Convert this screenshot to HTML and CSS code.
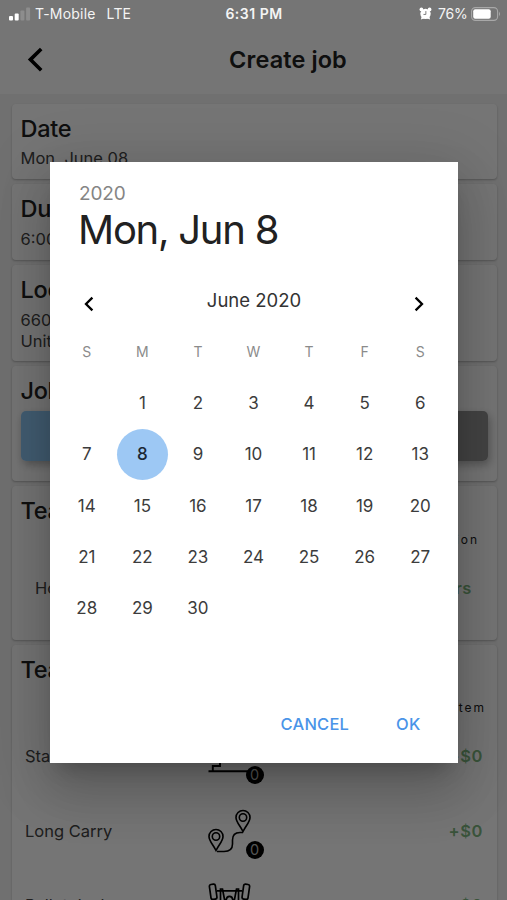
FILE: index.html
```html
<!DOCTYPE html>
<html lang="en">
<head>
	<meta charset="utf-8">
	<meta name="viewport" content="width=device-width, initial-scale=1">
	<title>Create job</title>
	<link rel="stylesheet" href="styles.css">
</head>
<body>
<div class="app">
	<header class="header">
		<svg class="back" viewBox="0 0 18 26" width="18" height="26">
			<path d="M 15.2 2 L 4.4 12.6 L 15.2 23.2" fill="none" stroke="#000" stroke-width="3.6"></path>
		</svg>
		<h1>Create job</h1>
	</header>

	<main class="cards">
		<section class="card card-date">
			<h2>Date</h2>
			<p>Mon, June 08</p>
		</section>
		<section class="card card-duration">
			<h2>Duration</h2>
			<p>6:00 PM</p>
		</section>
		<section class="card card-location">
			<h2>Location</h2>
			<p>660 Main St<br>United States</p>
		</section>
		<section class="card card-job">
			<h2>Job</h2>
			<div class="choices">
				<span class="choice choice-on"></span>
				<span class="choice"></span>
			</div>
		</section>
		<section class="card card-team">
			<h2>Team</h2>
			<div class="caption caption-team">Duration</div>
			<div class="row row-team"><span>Hours</span><b>hrs</b></div>
		</section>
		<section class="card card-items">
			<h2>Team</h2>
			<div class="caption">Item</div>
			<div class="row">
				<span>Stairs</span>
				<div class="icon">
					<!-- stairs -->
					<svg viewBox="0 0 46 46" width="46" height="46">
						<path d="M 0.5 38.2 H 40 M 4.8 38.2 V 33 H 12 V 26 H 19 V 20 H 26" fill="none" stroke="#000" stroke-width="1.9"></path>
					</svg>
					<i class="badge">0</i>
				</div>
				<b>+$0</b>
			</div>
			<div class="row">
				<span>Long Carry</span>
				<div class="icon">
					<!-- two pins joined by a route -->
					<svg viewBox="0 0 46 46" width="46" height="46">
						<g fill="none" stroke="#000" stroke-width="1.6">
							<path d="M 8 42.5 C 5 36.5 1 33 1 28.5 A 7 7 0 0 1 15 28.5 C 15 33 11 36.5 8 42.5 Z"></path>
							<circle cx="8" cy="28.5" r="3.7"></circle>
							<path d="M 35 23.5 C 32 17.5 28 14 28 9.5 A 7 7 0 0 1 42 9.5 C 42 14 38 17.5 35 23.5 Z"></path>
							<circle cx="35" cy="9.5" r="3.7"></circle>
							<path d="M 9 43.5 H 16 C 22 43.5 24.5 40 24.5 36 V 32 Q 24.5 24.5 32 24.5 H 35"></path>
						</g>
					</svg>
					<i class="badge">0</i>
				</div>
				<b>+$0</b>
			</div>
			<div class="row">
				<span>Pallet Jack</span>
				<div class="icon">
					<!-- wheels and frame -->
					<svg viewBox="0 0 46 46" width="46" height="46">
						<g fill="none" stroke="#000" stroke-width="1.7">
							<rect x="2.2" y="2.3" width="6" height="15" rx="1.8" transform="rotate(-8 5 10)"></rect>
							<rect x="34.8" y="2.3" width="6" height="15" rx="1.8" transform="rotate(8 38 10)"></rect>
							<path d="M 9 8.8 H 34 M 12.5 20 L 12.5 7 H 14.5 L 17 20 M 30.5 20 L 30.5 7 H 28.5 L 26 20 M 18 20 C 18 12.5 25 12.5 25 20"></path>
						</g>
					</svg>
				</div>
				<b>+$0</b>
			</div>
		</section>
	</main>
</div>

<div class="overlay">
	<div class="status">
		<div class="status-left">
			<svg viewBox="0 0 22 14" width="22" height="14">
				<rect x="0" y="9" width="4" height="4.5" rx="1" fill="#fff"></rect>
				<rect x="5.7" y="6.5" width="4" height="7" rx="1" fill="#fff"></rect>
				<rect x="11.4" y="3.5" width="4" height="10" rx="1" fill="#8d8d8d"></rect>
				<rect x="17.1" y="0.5" width="4" height="13" rx="1" fill="#8d8d8d"></rect>
			</svg>
			<span>T-Mobile</span>
			<span class="network">LTE</span>
		</div>
		<strong>6:31 PM</strong>
		<div class="status-right">
			<svg viewBox="0 0 14 14" width="13" height="13">
				<g fill="#fff">
					<circle cx="7" cy="7.4" r="5.6"></circle>
					<circle cx="2.6" cy="2.6" r="2"></circle>
					<circle cx="11.4" cy="2.6" r="2"></circle>
					<path d="M 2 13.5 L 3 10 L 6 12 Z M 12 13.5 L 11 10 L 8 12 Z"></path>
				</g>
				<path d="M 7.4 4.4 V 8 H 4.8" fill="none" stroke="#757575" stroke-width="1"></path>
			</svg>
			<span>76%</span>
			<svg viewBox="0 0 30 14" width="30" height="14">
				<rect x="0.6" y="0.6" width="26" height="12.8" rx="3.8" fill="none" stroke="#a8a8a8" stroke-width="1.1"></rect>
				<rect x="2.2" y="2.2" width="17.5" height="9.6" rx="2" fill="#fff"></rect>
				<path d="M 28 4.8 Q 30 7 28 9.2 Z" fill="#a8a8a8"></path>
			</svg>
		</div>
	</div>

	<div class="dialog">
		<div class="year">2020</div>
		<div class="day">Mon, Jun 8</div>
		<div class="month">
			<svg viewBox="0 0 12 16" width="12" height="16">
				<path d="M 9.4 1.6 L 3 8 L 9.4 14.4" fill="none" stroke="#000" stroke-width="2.3"></path>
			</svg>
			<span>June 2020</span>
			<svg viewBox="0 0 12 16" width="12" height="16">
				<path d="M 2.6 1.6 L 9 8 L 2.6 14.4" fill="none" stroke="#000" stroke-width="2.3"></path>
			</svg>
		</div>
		<div class="calendar">
			<small>S</small><small>M</small><small>T</small><small>W</small><small>T</small><small>F</small><small>S</small>
			<span></span><span>1</span><span>2</span><span>3</span><span>4</span><span>5</span><span>6</span>
			<span>7</span><span class="selected">8</span><span>9</span><span>10</span><span>11</span><span>12</span><span>13</span>
			<span>14</span><span>15</span><span>16</span><span>17</span><span>18</span><span>19</span><span>20</span>
			<span>21</span><span>22</span><span>23</span><span>24</span><span>25</span><span>26</span><span>27</span>
			<span>28</span><span>29</span><span>30</span>
		</div>
		<div class="actions">
			<button>CANCEL</button>
			<button>OK</button>
		</div>
	</div>
</div>
</body>
</html>
```
FILE: styles.css
```css
* {
  box-sizing: border-box;
  padding: 0;
  margin: 0;
}
body {
  height: 100vh;
  overflow: hidden;
  font-family: Inter, "Liberation Sans", sans-serif;
  color: #212121;
  background: #f3f3f3;
}
svg {
  display: block;
}
.app {
  height: 900px;
  overflow: hidden;
}
.header {
  height: 94px;
  padding: 25px 27px 0 26px;
  display: grid;
  grid-template-columns: 20px 1fr 20px;
  align-items: center;
  background: #fff;
}
.header h1 {
  padding-left: 70px;
  font-size: 23.5px;
  font-weight: 600;
  letter-spacing: 0.1px;
  text-align: center;
}

/* cards behind the dialog */
.cards {
  padding: 10px 10px 0 11.5px;
  display: flex;
  flex-direction: column;
  gap: 5px;
}
.card {
  flex: none;
  padding: 10px 9px 0;
  border-radius: 4px;
  background: #fff;
  box-shadow: 0 1px 2px rgba(0, 0, 0, 0.24);
}
.card h2 {
  font-size: 23.5px;
  line-height: 29px;
  font-weight: 500;
  letter-spacing: -0.3px;
}
.card p {
  margin-top: 5px;
  font-size: 16.5px;
  line-height: 21px;
  color: #444;
}
.card-date {
  height: 75px;
}
.card-duration {
  height: 76px;
}
.card-duration p {
  margin-top: 6px;
}
.card-location {
  height: 96px;
}
.card-location p {
  margin-top: 6px;
}
.card-job {
  height: 115px;
}
.card-team {
  height: 154px;
}
.card-items {
  height: 330px;
}
.choices {
  height: 50px;
  margin-top: 6px;
  display: grid;
  grid-template-columns: 1fr 1fr;
  border-radius: 5px;
  overflow: hidden;
  box-shadow: 2px 4px 8px rgba(0, 0, 0, 0.28);
}
.choice {
  background: #949494;
}
.choice-on {
  background: #90caf9;
}
.caption {
  height: 18px;
  margin-top: 15px;
  padding-right: 2px;
  font-size: 12px;
  line-height: 18px;
  letter-spacing: 2px;
  text-align: right;
}
.caption-team {
  margin-top: 6px;
  padding-right: 9px;
}
.row {
  height: 74.5px;
  padding: 0 5px 0 4.5px;
  display: grid;
  grid-template-columns: 183px 60px 1fr;
  align-items: center;
  font-size: 16.5px;
  color: #444;
}
.caption + .row {
  margin-top: 2px;
}
.row b {
  color: #7fb882;
  font-weight: 600;
  letter-spacing: 0.6px;
  text-align: right;
}
.caption-team + .row-team {
  margin-top: 2px;
  padding: 0 16px 0 14.5px;
  grid-template-columns: 1fr 1fr;
}
.icon {
  position: relative;
  width: 56px;
  height: 46px;
}
.badge {
  position: absolute;
  left: 37.5px;
  top: 33px;
  width: 18px;
  height: 18px;
  border-radius: 50%;
  background: #000;
  color: #b8b8b8;
  font-size: 14.5px;
  line-height: 18px;
  font-style: normal;
  text-align: center;
}

/* scrim, with the status bar and the dialog on it */
.overlay {
  position: absolute;
  inset: 0;
  background: rgba(0, 0, 0, 0.54);
}
.status {
  height: 28px;
  padding: 0 6px 1px 9px;
  display: grid;
  grid-template-columns: 1fr auto 1fr;
  align-items: center;
  font-size: 14px;
  color: #f4f4f4;
}
.status strong {
  padding-right: 2px;
  font-weight: 600;
  letter-spacing: 0.5px;
}
.status-left,
.status-right {
  display: flex;
  align-items: center;
  gap: 3.5px;
}
.status-left {
  gap: 4px;
  letter-spacing: 0.2px;
}
.status-right {
  justify-content: flex-end;
}
.status-right span {
  margin-left: 2px;
  letter-spacing: -0.2px;
}
.network {
  margin-left: 7px;
}
.dialog {
  width: 408px;
  height: 601px;
  margin: 134px 0 0 50px;
  padding: 20px 10px 17px 9px;
  display: flex;
  flex-direction: column;
  background: #fff;
  box-shadow: 0 14px 19px -9px rgba(0, 0, 0, 0.2), 0 30px 48px 4px rgba(0, 0, 0, 0.14), 0 11px 58px 10px rgba(0, 0, 0, 0.12);
}
.year {
  padding-left: 20px;
  font-size: 19px;
  line-height: 23px;
  letter-spacing: -0.1px;
  color: #858585;
}
.day {
  padding-left: 19px;
  font-size: 40px;
  line-height: 50px;
  letter-spacing: -1.25px;
}
.month {
  height: 51px;
  margin-top: 21px;
  padding: 0 23px 0 24px;
  display: flex;
  align-items: center;
  justify-content: space-between;
  font-size: 18.5px;
  color: #333;
}
.month svg {
  margin-top: 4px;
}
.month span {
  margin-top: -3px;
}
.calendar {
  margin-top: -1px;
  display: grid;
  grid-template-columns: repeat(7, 1fr);
  grid-auto-rows: 51.3px;
  place-items: center;
  font-size: 17px;
  color: #3c3c3c;
}
.calendar small {
  font-size: 14px;
  color: #8b8b8b;
}
.calendar .selected {
  width: 51px;
  height: 51px;
  border-radius: 50%;
  background: #9dc8f4;
  color: #1a2733;
  font-weight: 500;
  line-height: 51px;
  text-align: center;
}
.actions {
  margin-top: auto;
  padding-right: 27.5px;
  display: flex;
  justify-content: flex-end;
  gap: 47px;
}
.actions button {
  height: 44px;
  border: 0;
  background: none;
  font: 500 16.5px Inter, sans-serif;
  letter-spacing: 0.2px;
  color: #4a94e8;
}
```
